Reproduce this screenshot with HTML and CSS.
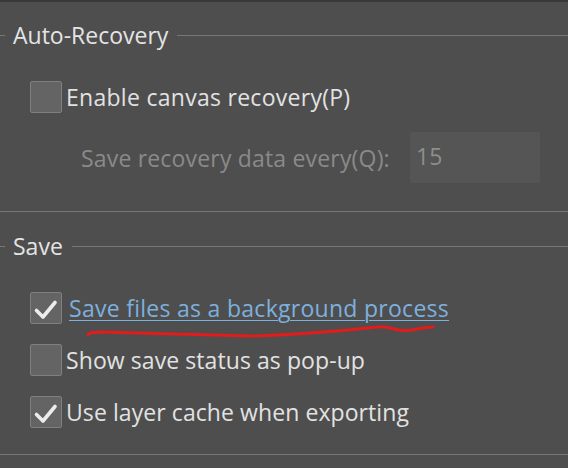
FILE: index.html
```html
<!DOCTYPE html>
<html>
<head>
<meta charset="utf-8">
<link rel="stylesheet" href="styles.css">
</head>
<body>
<div class="panel">
  <section class="group group-recovery">
    <div class="group-title"><span>Auto-Recovery</span></div>
    <label class="check-row first">
      <span class="box"></span>
      <span class="label wide">Enable canvas recovery(P)</span>
    </label>
    <div class="field-row">
      <span class="field-label">Save recovery data every(Q):</span>
      <span class="field-input">15</span>
    </div>
  </section>
  <section class="group group-save">
    <div class="group-title"><span>Save</span></div>
    <label class="check-row first">
      <span class="box checked">
        <svg viewBox="0 0 32 32" width="32" height="32"><path d="M6.5 18.5 L13 25 L25 10.5" fill="none" stroke="#ececec" stroke-width="3.6" stroke-linecap="round" stroke-linejoin="round"/></svg>
      </span>
      <span class="label link">Save files as a background process</span>
    </label>
    <label class="check-row">
      <span class="box"></span>
      <span class="label">Show save status as pop-up</span>
    </label>
    <label class="check-row">
      <span class="box checked">
        <svg viewBox="0 0 32 32" width="32" height="32"><path d="M6.5 18.5 L13 25 L25 10.5" fill="none" stroke="#ececec" stroke-width="3.6" stroke-linecap="round" stroke-linejoin="round"/></svg>
      </span>
      <span class="label">Use layer cache when exporting</span>
    </label>
  </section>
  <svg class="scribble" width="568" height="468" viewBox="0 0 568 468">
    <path d="M88 335 C89 332 96 331.5 120 332.5 L250 336 C300 335 340 331 378 327 C388 325.5 394 330.5 404 330.5 C414 330.5 420 327.5 433 327" fill="none" stroke="#e21b1b" stroke-width="3" stroke-linecap="round"/>
  </svg>
</div>
</body>
</html>
```
FILE: styles.css
```css
* { box-sizing: border-box; }
html, body { margin: 0; padding: 0; }
body {
  width: 568px;
  height: 468px;
  overflow: hidden;
  background: #4e4e4e;
  font-family: "Open Sans", "Noto Sans", sans-serif;
  font-size: 23px;
  color: #e2e2e2;
}
.panel {
  position: relative;
  height: 468px;
  border-top: 2px solid #383838;
}
.group {
  display: flex;
  flex-direction: column;
  border-bottom: 1px solid #777777;
}
.group-recovery { padding-top: 21px; padding-bottom: 28px; }
.group-save { padding-top: 22px; padding-bottom: 26px; }
.group-title {
  display: flex;
  align-items: center;
  height: 24px;
  line-height: 24px;
}
.group-title::before {
  content: "";
  width: 5px;
  height: 1px;
  background: #777777;
}
.group-title::after {
  content: "";
  flex: 1;
  height: 1px;
  background: #777777;
}
.group-title span {
  padding: 0 9px 0 8px;
  color: #e4e4e4;
}
.check-row {
  display: flex;
  align-items: center;
  height: 32px;
  line-height: 32px;
  margin-top: 20px;
  padding-left: 30px;
}
.check-row.first { margin-top: 34px; }
.box {
  width: 32px;
  height: 32px;
  flex: none;
  background: #646464;
  border: 1px solid #7f7f7f;
  border-radius: 2px;
  position: relative;
}
.box svg {
  position: absolute;
  left: -1px;
  top: -1px;
}
.label {
  margin-left: 4px;
  color: #e2e2e2;
  white-space: nowrap;
  letter-spacing: 0.08px;
}
.label.wide { letter-spacing: 0.28px; }
.label.link {
  margin-left: 7px;
  color: #7eb0df;
  letter-spacing: 0.28px;
  text-decoration: underline;
  text-decoration-thickness: 1px;
  text-underline-offset: 3px;
}
.field-row {
  display: flex;
  align-items: center;
  height: 51px;
  margin-top: 19px;
  padding-left: 81px;
}
.field-label {
  line-height: 32px;
  color: #8a8a8a;
  white-space: nowrap;
  width: 329px;
  letter-spacing: 0.18px;
}
.field-input {
  width: 130px;
  height: 51px;
  background: #555555;
  border-radius: 2px;
  color: #8e8e8e;
  line-height: 49px;
  padding-left: 6px;
}
.scribble {
  position: absolute;
  left: 0;
  top: -2px;
  pointer-events: none;
}
```
